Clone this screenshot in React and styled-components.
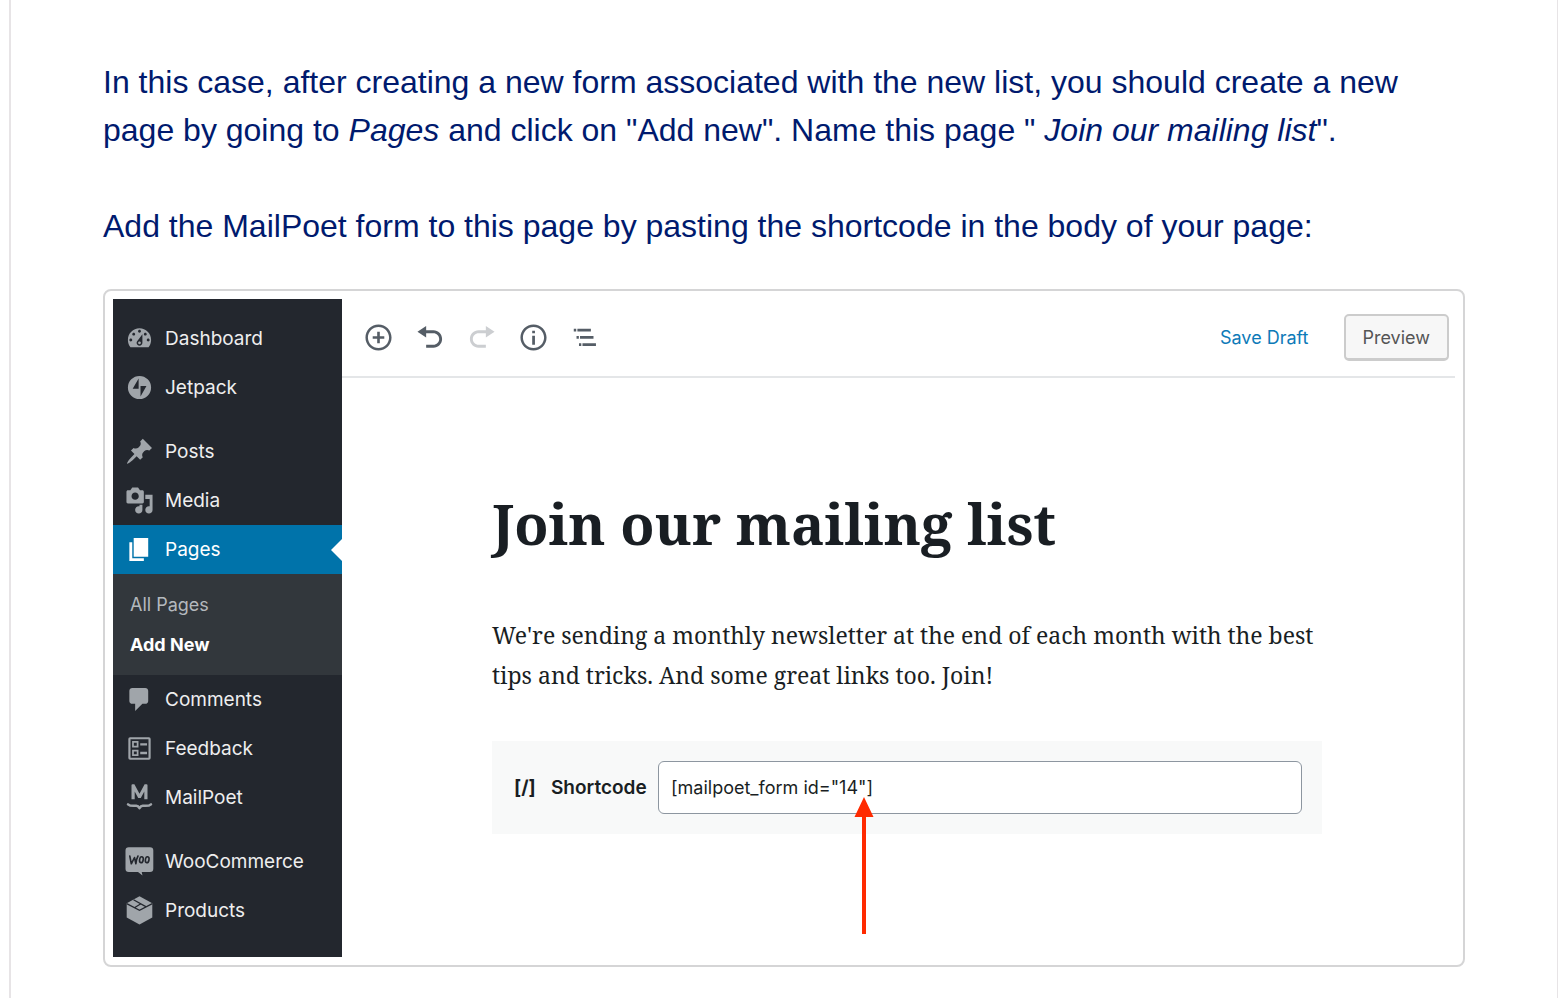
import React from "react";
import styled, { createGlobalStyle, css } from "styled-components";

const GlobalStyle = createGlobalStyle`
  *, *::before, *::after { box-sizing: border-box; }
  body { margin: 0; background: #fff; }
`;

const sans = css`font-family: "Liberation Sans", Arial, sans-serif;`;
const ui = css`font-family: Inter, Roboto, sans-serif;`;
const serif = css`font-family: "Noto Serif", "DejaVu Serif", serif;`;

const Article = styled.main`
  ${sans}
  margin-left: 9px;
  min-height: 100vh;
  padding: 58px 92px 32px;
  border-left: 2px solid #e7e4e6;
  border-right: 1px solid #e7e4e6;
  color: #001a6e;
`;

const Paragraph = styled.p`
  margin: 0 0 48px;
  font-size: 32px;
  line-height: 48px;
`;

const Frame = styled.figure`
  ${ui}
  display: flex;
  margin: -9px 0 0;
  padding: 8px;
  border: 2px solid #d5d5d6;
  border-radius: 8px;
`;

const Sidebar = styled.nav`
  flex: 0 0 229px;
  padding: 15px 0 22px;
  background: #23272e;
`;

const Menu = styled.ul`
  margin: 0;
  padding: 0;
  list-style: none;
  & + & { margin-top: 15px; }
`;

const MenuLink = styled.a`
  position: relative;
  display: flex;
  align-items: center;
  gap: 11px;
  height: 49px;
  padding-left: 12px;
  background: ${(p) => (p.$active ? "#0073aa" : "transparent")};
  color: ${(p) => (p.$active ? "#fff" : "#eee")};
  font-size: 19px;
  text-decoration: none;
  svg { color: ${(p) => (p.$active ? "#fff" : "#a0a5aa")}; }
`;

const Pointer = styled.span`
  position: absolute;
  right: 0;
  border: 11px solid transparent;
  border-left-width: 0;
  border-right-color: #fff;
`;

const Submenu = styled.ul`
  margin: 0;
  padding: 11px 0 10px 17px;
  background: #32373c;
  list-style: none;
`;

const SubmenuLink = styled.a`
  display: block;
  font-size: 18px;
  line-height: 40px;
  font-weight: ${(p) => (p.$current ? 700 : 400)};
  color: ${(p) => (p.$current ? "#fff" : "#b4b9be")};
  text-decoration: none;
`;

const Editor = styled.section`
  flex: 1;
  min-width: 0;
`;

const Toolbar = styled.header`
  display: flex;
  align-items: center;
  height: 79px;
  padding: 0 6px 0 22px;
  border-bottom: 2px solid #e4e6e8;
`;

const Tools = styled.div`
  display: flex;
  justify-content: space-between;
  width: 235px;
  margin-right: auto;
`;

const ToolButton = styled.button`
  display: flex;
  padding: 0;
  border: 0;
  background: none;
  color: #555d66;
  &:disabled { color: #ccced1; }
`;

const SaveButton = styled.button`
  ${ui}
  margin-right: 35px;
  padding: 0;
  border: 0;
  background: none;
  color: #0d7ab8;
  font-size: 18px;
`;

const PreviewButton = styled.button`
  ${ui}
  height: 47px;
  padding: 0 17px;
  border: 2px solid #ccc;
  border-bottom-width: 3px;
  border-radius: 5px;
  background: #f7f7f7;
  color: #555;
  font-size: 18px;
`;

const Document = styled.div`
  max-width: 980px;
  padding: 105px 0 0 150px;
  color: #191e23;
`;

const Title = styled.h1`
  ${serif}
  margin: 0;
  font-size: 56px;
  line-height: 80px;
  font-weight: 700;
`;

const Body = styled.p`
  ${serif}
  margin: 52px 0 46px;
  font-size: 23px;
  line-height: 40px;
`;

const Shortcode = styled.div`
  position: relative;
  display: flex;
  align-items: center;
  padding: 20px;
  background: #f8f9f9;
`;

const ShortcodeLabel = styled.label`
  display: grid;
  grid-template-columns: 39px 107px;
  align-items: center;
  font-size: 19px;
  font-weight: 600;
`;

const ShortcodeMark = styled.span`
  padding-left: 2px;
  font-weight: 700;
`;

const ShortcodeInput = styled.input`
  ${ui}
  flex: 1;
  min-width: 0;
  height: 53px;
  padding: 0 12px;
  border: 1px solid #8d96a0;
  border-radius: 6px;
  background: #fff;
  color: #191e23;
  font-size: 18px;
`;

const Arrow = styled.svg`
  position: absolute;
  top: 56px;
  left: 362px;
`;

const paths = {
  dashboard: "M3.76 16h12.48c1.1-1.37 1.76-3.11 1.76-5 0-4.42-3.58-8-8-8s-8 3.58-8 8c0 1.89.66 3.63 1.76 5zM10 4c.55 0 1 .45 1 1s-.45 1-1 1-1-.45-1-1 .45-1 1-1zM6 6c.55 0 1 .45 1 1s-.45 1-1 1-1-.45-1-1 .45-1 1-1zm8 0c.55 0 1 .45 1 1s-.45 1-1 1-1-.45-1-1 .45-1 1-1zm-5.37 5.55L12 7v6c0 1.1-.9 2-2 2s-2-.9-2-2c0-.57.24-1.08.63-1.45zM4 10c.55 0 1 .45 1 1s-.45 1-1 1-1-.45-1-1 .45-1 1-1zm12 0c.55 0 1 .45 1 1s-.45 1-1 1-1-.45-1-1 .45-1 1-1zm-5 3c0-.55-.45-1-1-1s-1 .45-1 1 .45 1 1 1 1-.45 1-1z",
  jetpack: "M10 2a8 8 0 1 0 0 16 8 8 0 0 0 0-16zM9.4 3.8v7.1H5.3zM10.7 16.2V9h4.1z",
  posts: "M10.44 3.02l1.82-1.82 6.36 6.35-1.83 1.82c-1.05-.68-2.48-.57-3.41.36l-.75.75c-.92.93-1.04 2.35-.35 3.41l-1.83 1.82-2.41-2.41-2.8 2.79c-.42.42-3.38 2.71-3.8 2.29s1.86-3.39 2.28-3.81l2.79-2.79L4.1 9.36l1.83-1.82c1.05.69 2.48.57 3.4-.36l.75-.75c.93-.92 1.05-2.35.36-3.41z",
  media: "M13 11V4c0-.55-.45-1-1-1h-1.67L9 1H5L3.67 3H2c-.55 0-1 .45-1 1v7c0 .55.45 1 1 1h10c.55 0 1-.45 1-1zM7 4.5c1.38 0 2.5 1.12 2.5 2.5S8.38 9.5 7 9.5 4.5 8.38 4.5 7 5.62 4.5 7 4.5zM14 6h5v10.5c0 1.38-1.12 2.5-2.5 2.5S14 17.88 14 16.5s1.12-2.5 2.5-2.5c.17 0 .34.02.5.05V9h-3V6zm-4 8.05V13h2v3.5c0 1.38-1.12 2.5-2.5 2.5S7 17.88 7 16.5 8.12 14 9.5 14c.17 0 .34.02.5.05z",
  pages: "M6 15V2h10v13H6zm-1 1h8v2H3V5h2v11z",
  comments: "M5 2h9c1.1 0 2 .9 2 2v7c0 1.1-.9 2-2 2h-2l-5 5v-5H5c-1.1 0-2-.9-2-2V4c0-1.1.9-2 2-2z",
  feedback: "M3.5 2.2h13a1.2 1.2 0 0 1 1.2 1.2v13.2a1.2 1.2 0 0 1-1.2 1.2h-13a1.2 1.2 0 0 1-1.2-1.2V3.4a1.2 1.2 0 0 1 1.2-1.2zM3.8 3.7v12.6h12.4V3.7zM4.900 4.900h4.400v4.400H4.900zM6.100 6.100v2h2v-2zM10.500 6.300h4.700v1.700h-4.700zM4.900 10.800h4.400v4.400H4.900zM6.100 12v2h2v-2zM10.500 12.200h4.700v1.700h-4.700z",
  insert: "M10 1c-5 0-9 4-9 9s4 9 9 9 9-4 9-9-4-9-9-9zm0 16.300c-4 0-7.300-3.300-7.300-7.300S6 2.700 10 2.700s7.300 3.300 7.300 7.300-3.300 7.300-7.300 7.300zM10.900 6H9.100v3.100H6v1.800h3.100V14h1.800v-3.100H14V9.100h-3.100z",
  undo: "M12 5H7V2L1 6l6 4V7h5c2.2 0 4 1.8 4 4s-1.800 4-4 4H7v2h5c3.300 0 6-2.700 6-6s-2.700-6-6-6z",
  redo: "M8 5h5V2l6 4-6 4V7H8c-2.200 0-4 1.800-4 4s1.800 4 4 4h5v2H8c-3.300 0-6-2.700-6-6s2.700-6 6-6z",
  info: "M10 1c-5 0-9 4-9 9s4 9 9 9 9-4 9-9-4-9-9-9zm0 16.300c-4 0-7.300-3.300-7.300-7.300S6 2.700 10 2.700s7.300 3.300 7.300 7.300-3.300 7.300-7.300 7.300zM9.100 8.800h1.900V15H9.100zM9.100 5.300h1.900v1.800H9.100z",
  outline: "M2.600 4h1.700v1.900H2.600zM5.100 4h9.300v1.900H5.100zM4.500 9h1.600v1.900H4.500zM6.900 9h9.300v1.900H6.900zM6.200 14h1.600v1.900H6.200zM8.600 14h9.300v1.900H8.600z",
};

const Icon = ({ name }) => (
  <svg width="29" height="29" viewBox="0 0 20 20" fill="currentColor" fillRule="evenodd" aria-hidden="true">
    <path d={paths[name]} />
  </svg>
);

const MailPoetIcon = () => (
  <svg width="29" height="29" viewBox="0 0 29 29" fill="none" stroke="currentColor" aria-hidden="true">
    <path d="M6.500 16.300V2.200a1 1 0 0 1 1-1h1.900l5.100 9.500 5.100-9.500h1.900a1 1 0 0 1 1 1v14.100h-3.200V8.500l-3.500 6.500h-2.600L9.700 8.500v7.800z" fill="currentColor" stroke="none" />
    <path d="M3 21.300c2 1.900 5 1.700 8 1.400 2-.2 2.500.5 3.500 2.400 1-1.900 1.500-2.600 3.500-2.400 3 .3 6 .5 8-1.400" strokeWidth="2.500" strokeLinecap="round" strokeLinejoin="round" />
  </svg>
);

const WooIcon = () => (
  <svg width="29" height="29" viewBox="0 0 29 29" fill="none" aria-hidden="true">
    <path d="M3.800.3h21.200a3.300 3.300 0 0 1 3.300 3.300v18.200a3.300 3.300 0 0 1-3.300 3.300h-8.300l.8 3.400-4.500-3.400H3.800A3.300 3.300 0 0 1 .5 21.800V3.600A3.300 3.300 0 0 1 3.800.3z" fill="currentColor" />
    <g stroke="#23272e" strokeWidth="1.600" strokeLinecap="round" strokeLinejoin="round">
      <path d="M4.800 9l1.500 7.800 3.200-6.300 1.400 6.300c.2-3.200.9-5.600 2.100-7.800" />
      <ellipse cx="16.400" cy="12.700" rx="1.800" ry="3" transform="rotate(10 16.400 12.700)" />
      <ellipse cx="22.200" cy="12.700" rx="1.800" ry="3" transform="rotate(10 22.200 12.700)" />
    </g>
  </svg>
);

const ProductsIcon = () => (
  <svg width="29" height="29" viewBox="0 0 29 29" fill="none" aria-hidden="true">
    <path d="M14.500.3 27.300 7.300v14.200L14.500 28.600 1.700 21.500V7.300z" fill="currentColor" />
    <path d="M1.700 7.600l12.800 6.800 12.800-6.800M8.500 3.800l12.300 6.800M9.800 11.600l5.700-3.500" stroke="#23272e" strokeWidth="1.200" />
  </svg>
);

const groups = [
  [
    { label: "Dashboard", icon: <Icon name="dashboard" /> },
    { label: "Jetpack", icon: <Icon name="jetpack" /> },
  ],
  [
    { label: "Posts", icon: <Icon name="posts" /> },
    { label: "Media", icon: <Icon name="media" /> },
    { label: "Pages", icon: <Icon name="pages" />, children: ["All Pages", "Add New"] },
    { label: "Comments", icon: <Icon name="comments" /> },
    { label: "Feedback", icon: <Icon name="feedback" /> },
    { label: "MailPoet", icon: <MailPoetIcon /> },
  ],
  [
    { label: "WooCommerce", icon: <WooIcon /> },
    { label: "Products", icon: <ProductsIcon /> },
  ],
];

const MenuItem = ({ label, icon, children }) => (
  <li>
    <MenuLink href="#" $active={Boolean(children)}>
      {icon}
      {label}
      {children && <Pointer />}
    </MenuLink>
    {children && (
      <Submenu>
        {children.map((child) => (
          <li key={child}>
            <SubmenuLink href="#" $current={child === "Add New"}>{child}</SubmenuLink>
          </li>
        ))}
      </Submenu>
    )}
  </li>
);

export default function App() {
  return (
    <>
      <GlobalStyle />
      <Article>
        <Paragraph>
          In this case, after creating a new form associated with the new list, you should create a new
          page by going to <em>Pages</em> and click on "Add new". Name this page " <em>Join our mailing list</em>".
        </Paragraph>
        <Paragraph>
          Add the MailPoet form to this page by pasting the shortcode in the body of your page:
        </Paragraph>
        <Frame>
          <Sidebar>
            {groups.map((items) => (
              <Menu key={items[0].label}>
                {items.map((item) => <MenuItem key={item.label} {...item} />)}
              </Menu>
            ))}
          </Sidebar>
          <Editor>
            <Toolbar>
              <Tools>
                <ToolButton aria-label="Add block"><Icon name="insert" /></ToolButton>
                <ToolButton aria-label="Undo"><Icon name="undo" /></ToolButton>
                <ToolButton aria-label="Redo" disabled><Icon name="redo" /></ToolButton>
                <ToolButton aria-label="Content structure"><Icon name="info" /></ToolButton>
                <ToolButton aria-label="Block navigation"><Icon name="outline" /></ToolButton>
              </Tools>
              <SaveButton>Save Draft</SaveButton>
              <PreviewButton>Preview</PreviewButton>
            </Toolbar>
            <Document>
              <Title>Join our mailing list</Title>
              <Body>
                We're sending a monthly newsletter at the end of each month with the best
                tips and tricks. And some great links too. Join!
              </Body>
              <Shortcode>
                <ShortcodeLabel htmlFor="shortcode">
                  <ShortcodeMark>[/]</ShortcodeMark>
                  Shortcode
                </ShortcodeLabel>
                <ShortcodeInput id="shortcode" type="text" defaultValue={'[mailpoet_form id="14"]'} />
                <Arrow width="20" height="137" viewBox="0 0 20 137" fill="#ff2a00" aria-hidden="true">
                  <path d="M10 0l9.500 20H12v117H8V20H.5z" />
                </Arrow>
              </Shortcode>
            </Document>
          </Editor>
        </Frame>
      </Article>
    </>
  );
}
